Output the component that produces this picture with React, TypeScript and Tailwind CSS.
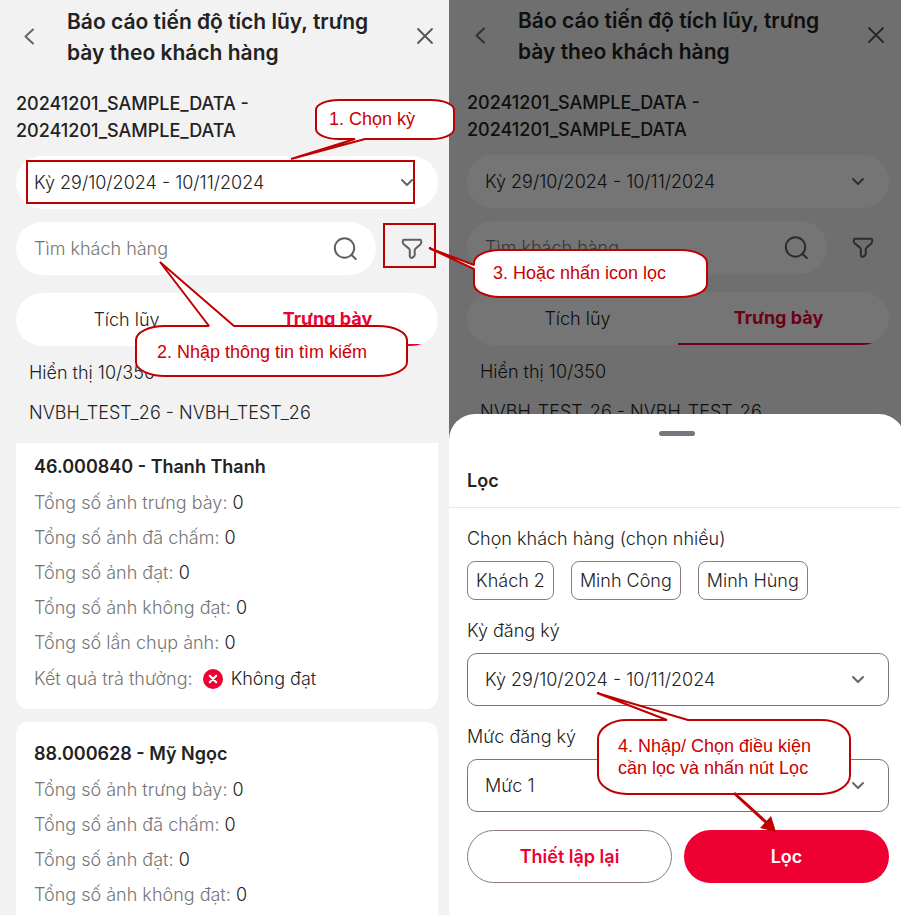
import type { ReactNode } from "react";

const PERIOD = "Kỳ 29/10/2024 - 10/11/2024";

function BackIcon() {
  return (
    <svg width="18" height="20" viewBox="0 0 18 20" fill="none" stroke="#666" strokeWidth="2" strokeLinecap="round" strokeLinejoin="round" aria-hidden="true">
      <path d="M13 2.500 5.500 9.500 13 16.500" />
    </svg>
  );
}

function CloseIcon() {
  return (
    <svg width="20" height="20" viewBox="0 0 20 20" fill="none" stroke="#555" strokeWidth="1.800" strokeLinecap="round" aria-hidden="true">
      <path d="m3 2 14 14M17 2 3 16" />
    </svg>
  );
}

function ChevronIcon() {
  return (
    <svg className="pointer-events-none col-start-1 row-start-1 justify-self-end" width="14" height="10" viewBox="0 0 14 10" fill="none" stroke="#666" strokeWidth="2" strokeLinecap="round" strokeLinejoin="round" aria-hidden="true">
      <path d="m2 2 5 5 5-5" />
    </svg>
  );
}

function SearchIcon() {
  return (
    <svg width="26" height="26" viewBox="0 0 26 26" fill="none" stroke="#606060" strokeWidth="2" strokeLinecap="round" aria-hidden="true">
      <circle cx="12.500" cy="12" r="9.700" />
      <path d="m19.500 19 4.300 4" />
    </svg>
  );
}

function FunnelIcon() {
  return (
    <svg width="22" height="22" viewBox="0 0 22 22" fill="none" stroke="#606060" strokeWidth="2" strokeLinejoin="round" aria-hidden="true">
      <path d="M3 1.800h16c.8 0 1.200.4 1.200 1.200v1.400c0 .8-.3 1.400-.9 2l-4.600 4.100c-.7.6-1 1.200-1 2v4.600c0 .6-.3 1.100-.9 1.500l-1.500 1c-1.100.7-2.500 0-2.500-1.300v-5.800c0-.7-.3-1.400-.8-1.900L2.700 6.300c-.6-.6-.9-1.200-.9-1.900V3c0-.8.4-1.200 1.200-1.200Z" />
    </svg>
  );
}

function FailIcon() {
  return (
    <svg className="mr-2 ml-[10px]" width="20" height="20" viewBox="0 0 20 20" aria-hidden="true">
      <circle cx="10" cy="10" r="10" fill="#ee0033" />
      <path d="m6.800 6.800 6.400 6.400m0-6.400-6.400 6.400" stroke="#fff" strokeWidth="2.200" strokeLinecap="round" />
    </svg>
  );
}

function ReportScreen({ id, children }: { id: string; children?: ReactNode }) {
  return (
    <>
      <header className="flex items-center">
        <button type="button" aria-label="Quay lại" className="ml-1 flex h-8 w-[47px] items-center">
          <BackIcon />
        </button>
        <h1 className="flex-1 text-[21px] leading-[31px] font-semibold">
          Báo cáo tiến độ tích lũy, trưng
          <br />
          bày theo khách hàng
        </h1>
        <button type="button" aria-label="Đóng" className="mr-[3px] flex">
          <CloseIcon />
        </button>
      </header>
      <h2 className="mt-[22px] leading-[27px] font-medium">
        20241201_SAMPLE_DATA -<br />
        20241201_SAMPLE_DATA
      </h2>
      <div className="mt-3 grid h-[53px] items-center rounded-full bg-white pr-6 pl-[18px]">
        <select aria-label="Kỳ" className="col-start-1 row-start-1 appearance-none bg-transparent outline-none">
          <option>{PERIOD}</option>
        </select>
        <ChevronIcon />
      </div>
      <div className="mt-[13px] flex items-center">
        <div className="flex h-[53px] min-w-0 flex-1 items-center rounded-full bg-white pr-[18px] pl-[18px]">
          <input
            type="text"
            aria-label="Tìm khách hàng"
            placeholder="Tìm khách hàng"
            className="min-w-0 flex-1 bg-transparent outline-none placeholder:text-[#757575]"
          />
          <SearchIcon />
        </div>
        <button type="button" aria-label="Lọc khách hàng" className="flex w-[62px] justify-end pr-[15px]">
          <FunnelIcon />
        </button>
      </div>
      <div role="tablist" className="mt-[18px] grid h-[53px] grid-cols-2 overflow-hidden rounded-full bg-white">
        <button type="button" role="tab" aria-selected="false" id={id + "-tab-1"} className="pl-[10px]">
          Tích lũy
        </button>
        <button type="button" role="tab" aria-selected="true" id={id + "-tab-2"} className="border-b-2 border-[#ee0033] pr-[10px] font-bold text-[#ee0033]">
          Trưng bày
        </button>
      </div>
      <p className="mt-[7px] pl-[13px] leading-10">Hiển thị 10/350</p>
      <p className="pl-[13px] leading-10">NVBH_TEST_26 - NVBH_TEST_26</p>
      {children}
    </>
  );
}

const COUNTS = ["Tổng số ảnh trưng bày", "Tổng số ảnh đã chấm", "Tổng số ảnh đạt", "Tổng số ảnh không đạt"];

function CustomerCard({ name, className, labels, result }: { name: string; className: string; labels: string[]; result?: string }) {
  return (
    <article className={"bg-white px-[18px] " + className}>
      <h3 className="leading-9 font-semibold">{name}</h3>
      {labels.map((label) => (
        <p key={label} className="leading-[35px] text-[#757575]">
          {label}: <span className="text-[#222]">0</span>
        </p>
      ))}
      {result && (
        <p className="flex h-[38px] items-center text-[#757575]">
          Kết quả trả thưởng:
          <FailIcon />
          <span className="text-[#222]">{result}</span>
        </p>
      )}
    </article>
  );
}

function SheetSelect({ id, label, value }: { id: string; label: string; value: string }) {
  return (
    <div>
      <label htmlFor={id} className="block leading-8">
        {label}
      </label>
      <div className="mt-[6px] grid h-[53px] items-center rounded-[10px] border border-[#777] pr-[23px] pl-[17px]">
        <select id={id} className="col-start-1 row-start-1 appearance-none bg-transparent outline-none">
          <option>{value}</option>
        </select>
        <ChevronIcon />
      </div>
    </div>
  );
}

function FilterSheet() {
  return (
    <section className="absolute -right-1 bottom-0 left-0 rounded-t-[26px] bg-white pb-8">
      <div className="flex justify-center pt-[17px]">
        <div className="h-[5px] w-9 rounded-full bg-[#79747e]" />
      </div>
      <h2 className="mt-[29px] border-b border-[#e8e8e8] pb-[10px] pl-[18px] leading-8 font-semibold">Lọc</h2>
      <div className="pr-4 pl-[18px]">
        <p className="mt-[15px] leading-8">Chọn khách hàng (chọn nhiều)</p>
        <div className="mt-[6px] mb-[15px] flex gap-[17px]">
          {["Khách 2", "Minh Công", "Minh Hùng"].map((name) => (
            <button key={name} type="button" className="h-[39px] rounded-lg border border-[#8d7b7b] px-2">
              {name}
            </button>
          ))}
        </div>
        <div className="flex flex-col gap-[15px]">
          <SheetSelect id="period" label="Kỳ đăng ký" value={PERIOD} />
          <SheetSelect id="level" label="Mức đăng ký" value="Mức 1" />
        </div>
        <div className="mt-[18px] grid grid-cols-2 gap-3">
          <button type="button" className="h-[53px] rounded-full border border-[#8d7b7b] font-semibold text-[#ee0033]">
            Thiết lập lại
          </button>
          <button type="button" className="h-[53px] rounded-full bg-[#ee0033] font-semibold text-white">
            Lọc
          </button>
        </div>
      </div>
    </section>
  );
}

function Callout({ className, outline, children, arrow }: { className: string; outline: string; children: ReactNode; arrow?: ReactNode }) {
  return (
    <div className={"absolute flex items-center font-['Liberation_Sans',Arial,sans-serif] text-lg leading-[22px] font-normal text-[#cc0000] " + className}>
      <svg className="absolute inset-0 h-full w-full overflow-visible" fill="#fff" stroke="#c00000" strokeWidth="2" strokeLinejoin="bevel" aria-hidden="true">
        <path d={outline} />
        {arrow}
      </svg>
      <p className="relative whitespace-nowrap">{children}</p>
    </div>
  );
}

export default function App() {
  return (
    <main className="relative grid h-screen min-h-[915px] grid-cols-[449fr_452fr] overflow-hidden bg-[#f2f2f2] font-['Inter','Noto_Sans',sans-serif] text-lg font-light text-[#222]">
      <section className="flex h-full min-w-0 flex-col overflow-hidden pt-[6px] pr-[11px] pl-4">
        <ReportScreen id="report">
          <div className="mt-[10px] flex flex-1 flex-col gap-[13px]">
            <CustomerCard
              name="46.000840 - Thanh Thanh"
              className="rounded-b-xl pt-[6px] pb-[11px]"
              labels={[...COUNTS, "Tổng số lần chụp ảnh"]}
              result="Không đạt"
            />
            <CustomerCard name="88.000628 - Mỹ Ngọc" className="flex-1 rounded-t-xl pt-[14px]" labels={COUNTS} />
          </div>
        </ReportScreen>
      </section>

      <section className="relative h-full min-w-0 overflow-hidden pt-[5px] pr-3 pl-[18px]">
        <ReportScreen id="filtered" />
        <div className="absolute inset-0 bg-black/54" />
        <FilterSheet />
      </section>

      <div className="pointer-events-none absolute top-[160px] left-[26px] h-11 w-[389px] border-2 border-[#c00000]" />
      <div className="pointer-events-none absolute top-[223px] left-[383px] h-[45px] w-[53px] border-2 border-[#c00000]" />

      <Callout
        className="top-[99px] left-[315px] h-10 w-[140px] pl-[14px]"
        outline="M24 1H116A23 10 0 0 1 139 11V30A23 10 0 0 1 116 40H50L-24 60 40 40H24A23 10 0 0 1 1 30V11A23 10 0 0 1 24 1Z"
      >
        1. Chọn kỳ
      </Callout>
      <Callout
        className="top-[326px] left-[135px] h-[51px] w-[273px] pl-[22px]"
        outline="M30 0H74L25-64 99 0H243A29 14 0 0 1 272 14V36A29 14 0 0 1 243 50H30A29 14 0 0 1 1 36V14A29 14 0 0 1 30 0Z"
      >
        2. Nhập thông tin tìm kiếm
      </Callout>
      <Callout
        className="top-[249px] left-[473px] h-12 w-[235px] pl-5"
        outline="M27 1H208A26 13 0 0 1 234 14V35A26 13 0 0 1 208 48H27A26 13 0 0 1 1 35V20L-44-1 1 16V14A26 13 0 0 1 27 1Z"
      >
        3. Hoặc nhấn icon lọc
      </Callout>
      <Callout
        className="top-[719px] left-[597px] h-[75px] w-[254px] pl-[21px]"
        outline="M30 1H70L0-26 91 1H224A29 19 0 0 1 253 20V56A29 19 0 0 1 224 75H30A29 19 0 0 1 1 56V20A29 19 0 0 1 30 1Z"
        arrow={
          <>
            <path d="M137 74 171 105" strokeWidth="3" />
            <path d="M179 113 163 109 174 97Z" fill="#c00000" stroke="none" />
          </>
        }
      >
        4. Nhập/ Chọn điều kiện
        <br />
        cần lọc và nhấn nút Lọc
      </Callout>
    </main>
  );
}
